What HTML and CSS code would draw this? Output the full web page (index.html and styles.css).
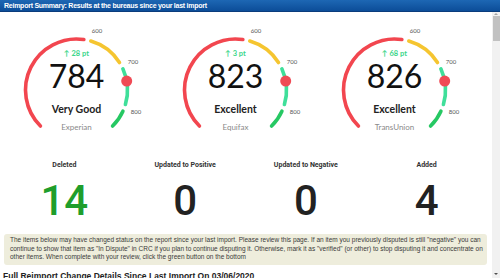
FILE: index.html
```html
<!DOCTYPE html>
<html lang="en">
<head>
<meta charset="utf-8">
<title>Reimport Summary</title>
<link rel="stylesheet" href="styles.css">
</head>
<body>
<header class="titlebar">Reimport Summary: Results at the bureaus since your last import</header>
<div class="frame">
  <main class="content">
    <section class="gauges">
      <div class="gauge">
        <svg class="gauge-svg" viewBox="0 0 159 115" width="159" height="115">
          <path class="arc red" d="M43.44 106.06 A51 51 0 0 1 86.86 19.54"/>
          <path class="arc yellow" d="M93.82 21.05 A51 51 0 0 1 122.47 42.52"/>
          <path class="arc teal" d="M125.87 48.77 A51 51 0 0 1 128.40 84.48"/>
          <path class="arc green" d="M125.91 91.15 A51 51 0 0 1 115.56 106.06"/>
          <circle class="marker" cx="129.7" cy="61.1" r="5.5"/>
          <text class="tick" x="100" y="12.5">600</text>
          <text class="tick" x="136" y="43.5">700</text>
          <text class="tick" x="139" y="93.5">800</text>
          <text class="delta" x="79.5" y="36">↑ 28 pt</text>
          <text class="score" x="79.5" y="68">784</text>
          <text class="rating" x="79.5" y="93">Very Good</text>
          <text class="bureau" x="79.5" y="110">Experian</text>
        </svg>
      </div>
      <div class="gauge">
        <svg class="gauge-svg" viewBox="0 0 159 115" width="159" height="115">
          <path class="arc red" d="M43.44 106.06 A51 51 0 0 1 86.86 19.54"/>
          <path class="arc yellow" d="M93.82 21.05 A51 51 0 0 1 122.47 42.52"/>
          <path class="arc teal" d="M125.87 48.77 A51 51 0 0 1 128.40 84.48"/>
          <path class="arc green" d="M125.91 91.15 A51 51 0 0 1 115.56 106.06"/>
          <circle class="marker" cx="129.7" cy="61.1" r="5.5"/>
          <text class="tick" x="100" y="12.5">600</text>
          <text class="tick" x="136" y="43.5">700</text>
          <text class="tick" x="139" y="93.5">800</text>
          <text class="delta" x="79.5" y="36">↑ 3 pt</text>
          <text class="score" x="79.5" y="68">823</text>
          <text class="rating" x="79.5" y="93">Excellent</text>
          <text class="bureau" x="79.5" y="110">Equifax</text>
        </svg>
      </div>
      <div class="gauge">
        <svg class="gauge-svg" viewBox="0 0 159 115" width="159" height="115">
          <path class="arc red" d="M43.44 106.06 A51 51 0 0 1 86.86 19.54"/>
          <path class="arc yellow" d="M93.82 21.05 A51 51 0 0 1 122.47 42.52"/>
          <path class="arc teal" d="M125.87 48.77 A51 51 0 0 1 128.40 84.48"/>
          <path class="arc green" d="M125.91 91.15 A51 51 0 0 1 115.56 106.06"/>
          <circle class="marker" cx="129.7" cy="61.1" r="5.5"/>
          <text class="tick" x="100" y="12.5">600</text>
          <text class="tick" x="136" y="43.5">700</text>
          <text class="tick" x="139" y="93.5">800</text>
          <text class="delta" x="79.5" y="36">↑ 68 pt</text>
          <text class="score" x="79.5" y="68">826</text>
          <text class="rating" x="79.5" y="93">Excellent</text>
          <text class="bureau" x="79.5" y="110">TransUnion</text>
        </svg>
      </div>
    </section>

    <section class="stats">
      <div class="stat">
        <div class="stat-label">Deleted</div>
        <div class="stat-value positive">14</div>
      </div>
      <div class="stat">
        <div class="stat-label">Updated to Positive</div>
        <div class="stat-value">0</div>
      </div>
      <div class="stat">
        <div class="stat-label">Updated to Negative</div>
        <div class="stat-value">0</div>
      </div>
      <div class="stat">
        <div class="stat-label">Added</div>
        <div class="stat-value">4</div>
      </div>
    </section>

    <div class="notice">The items below may have changed status on the report since your last import. Please review this page. If an item you previously disputed is still "negative" you can<br>continue to show that item as "In Dispute" in CRC if you plan to continue disputing it. Otherwise, mark it as "verified" (or other) to stop disputing it and concentrate on<br>other items. When complete with your review, click the green button on the bottom</div>

    <h2 class="details-title">Full Reimport Change Details Since Last Import On 03/06/2020</h2>
  </main>
  <div class="scrollbar">
    <span class="arrow arrow-up"></span>
    <div class="thumb"></div>
    <div class="track"></div>
    <span class="arrow arrow-down"></span>
  </div>
</div>
</body>
</html>
```

FILE: styles.css
```css
* { box-sizing: border-box; }

html, body {
  margin: 0;
  padding: 0;
  width: 500px;
  height: 278px;
  overflow: hidden;
  background: #fff;
  font-family: "Liberation Sans", Arial, sans-serif;
}

.titlebar {
  height: 12px;
  padding: 0 4px;
  background: linear-gradient(#1d67b4, #0c4d98);
  border-bottom: 1px solid #0a3c7c;
  color: #fff;
  font-weight: bold;
  font-size: 7px;
  letter-spacing: -0.25px;
  line-height: 11px;
  white-space: nowrap;
}

.frame {
  display: flex;
  height: 266px;
}

.content {
  flex: 1;
  min-width: 0;
  padding: 0 5px 0 4px;
  overflow: hidden;
}

.gauges {
  display: grid;
  grid-template-columns: repeat(3, 159px);
  margin: 8px 0 0 -7px;
}

.gauge-svg { display: block; }

.arc {
  fill: none;
  stroke-width: 3.6;
  stroke-linecap: round;
}
.arc.red { stroke: #f2464f; }
.arc.yellow { stroke: #f5c530; }
.arc.teal { stroke: #3fdf9a; }
.arc.green { stroke: #26c863; }

.marker { fill: #f04a55; }

.gauge-svg text {
  font-family: Lato, "Liberation Sans", sans-serif;
  text-anchor: middle;
}
.tick { font-size: 6px; fill: #555; }
.delta { font-size: 7.5px; font-weight: bold; fill: #3cd68a; }
.score { font-size: 32px; fill: #111; }
.rating { font-size: 10.5px; font-weight: bold; fill: #222; }
.bureau { font-size: 8px; fill: #8a8a8a; }

.stats {
  display: grid;
  grid-template-columns: repeat(4, 1fr);
  margin-top: 26px;
  text-align: center;
}

.stat-label {
  font-family: Roboto, "Liberation Sans", sans-serif;
  font-size: 7px;
  font-weight: bold;
  color: #333;
  line-height: 9px;
}

.stat-value {
  font-family: Roboto, "Liberation Sans", sans-serif;
  font-size: 42px;
  font-weight: 500;
  line-height: 42px;
  margin-top: 9.5px;
  color: #222;
}
.stat-value.positive { color: #1f9e2c; }

.notice {
  margin-top: 12.5px;
  padding: 2px 6px 3px;
  background: #eeeddc;
  border-radius: 3px;
  color: #3a3a3a;
  font-size: 6.5px;
  line-height: 8.5px;
  white-space: nowrap;
  overflow: hidden;
}

.details-title {
  margin: 6px 0 0 -1px;
  font-size: 8.5px;
  font-weight: bold;
  color: #222;
  line-height: 10px;
  white-space: nowrap;
}

.scrollbar {
  width: 8px;
  background: #f1f1f1;
  display: flex;
  flex-direction: column;
  align-items: center;
}
.arrow {
  width: 0;
  height: 0;
  border-left: 2px solid transparent;
  border-right: 2px solid transparent;
}
.arrow-up {
  margin-top: 1px;
  border-bottom: 2px solid #a3a3a3;
}
.arrow-down {
  margin-bottom: 3px;
  border-top: 2px solid #505050;
}
.thumb {
  width: 7px;
  height: 25px;
  margin-top: 1px;
  background: #c1c1c1;
}
.track { flex: 1; }
```
